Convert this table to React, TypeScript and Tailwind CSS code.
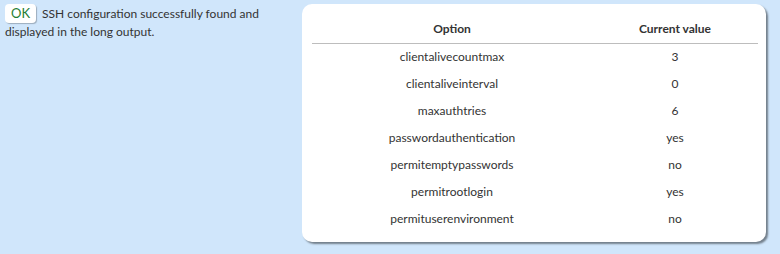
import React from "react";

const rows: [string, string][] = [
  ["clientalivecountmax", "3"],
  ["clientaliveinterval", "0"],
  ["maxauthtries", "6"],
  ["passwordauthentication", "yes"],
  ["permitemptypasswords", "no"],
  ["permitrootlogin", "yes"],
  ["permituserenvironment", "no"],
];

export default function App() {
  return (
    <div
      className="w-[780px] h-[254px] bg-[#d0e6fb] flex items-start text-[12px] text-[#333]"
      style={{ fontFamily: "Lato, 'Noto Sans', sans-serif" }}
    >
      <div className="w-[302px] pl-[5px] pt-[4px] pr-2 leading-[18px]">
        <span className="inline-block bg-white text-[#1e7e34] text-[13px] leading-[19px] px-[6px] rounded-[4px] mr-[6px] shadow-[1px_1px_1px_rgba(0,0,0,0.25)]">
          OK
        </span>
        SSH configuration successfully found and displayed in the long output.
      </div>
      <div className="mt-[4px] w-[464px] h-[238px] bg-white rounded-[10px] shadow-[2px_2px_2px_rgba(0,0,0,0.45)] pl-[10px] pr-[8px] pt-[13px]">
        <table className="w-full border-collapse">
          <thead>
            <tr className="border-b border-[#bdbdbd]">
              <th className="w-[280px] h-[26px] font-bold text-center align-middle pb-[2px]">Option</th>
              <th className="h-[26px] font-bold text-center align-middle pb-[2px]">Current value</th>
            </tr>
          </thead>
          <tbody>
            {rows.map(([k, v]) => (
              <tr key={k} className="h-[27px]">
                <td className="text-center align-middle">{k}</td>
                <td className="text-center align-middle">{v}</td>
              </tr>
            ))}
          </tbody>
        </table>
      </div>
    </div>
  );
}
